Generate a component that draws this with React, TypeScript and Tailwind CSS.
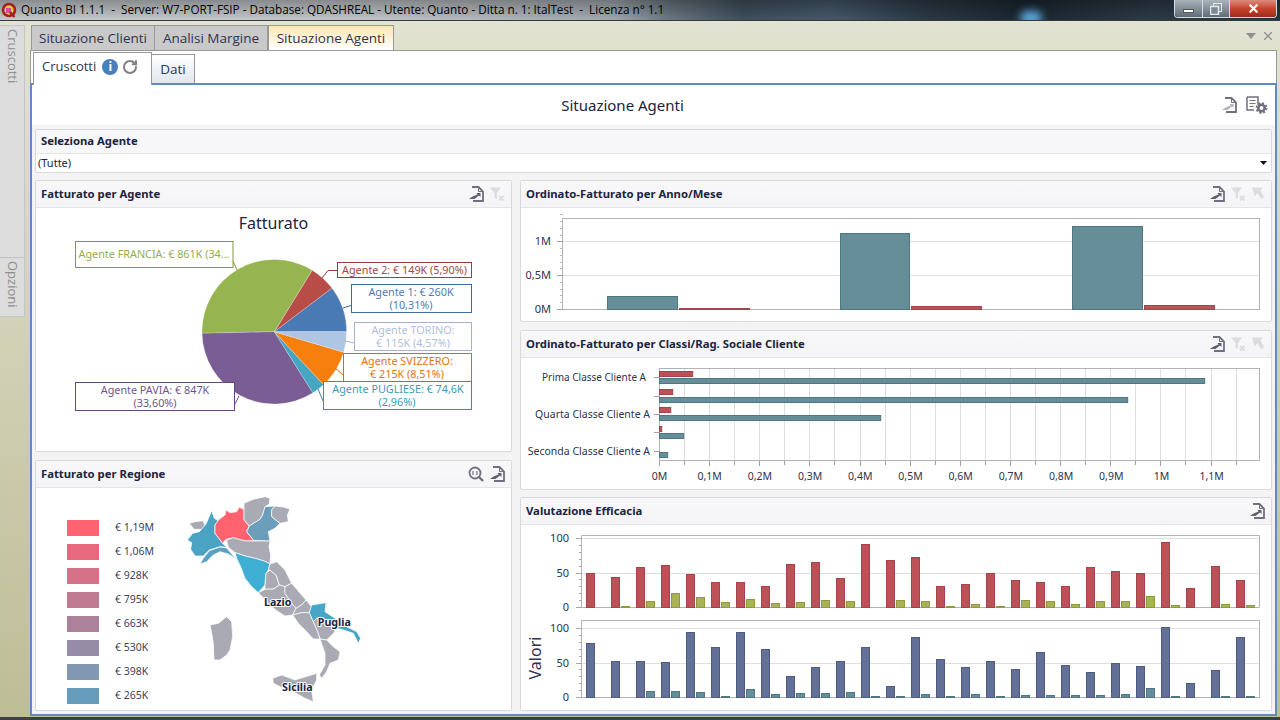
import type { ReactNode } from "react";
import { RotateCw, X } from "lucide-react";

const font = "font-['Noto_Sans',sans-serif]";
const chartFont = "'Noto Sans', sans-serif";

function ExportIcon({ light }: { light?: boolean }) {
  return (
    <svg width="16" height="16" viewBox="0 0 16 16" fill="none">
      <path d="M4 1h6.500L15 5.500V15H5" stroke="#70707f" strokeWidth="1.800" />
      <path d="M10.500 1v4.500H15" stroke="#70707f" />
      <path d="M8.500 7H12.500V11L11 9.500 6.500 13H1C3 11 6 10 9.500 8.500z" fill={light ? "#b4b4bc" : "#5f5f70"} />
    </svg>
  );
}

function FilterClearIcon() {
  return (
    <svg width="16" height="16" viewBox="0 0 16 16" fill="#dcdce0">
      <path d="M1 1.500h11L8 7v6L5.500 11.500V7z" />
      <path d="M10 10l4.500 4.500M14.500 10L10 14.500" stroke="#dcdce0" strokeWidth="1.800" />
    </svg>
  );
}

function DrillUpIcon() {
  return (
    <svg width="14" height="16" viewBox="0 0 14 16" fill="#dcdce0">
      <path d="M1 1.500h11L9.500 4.500 13 11 10 13 6.500 7 3.500 10.500z" />
    </svg>
  );
}

function ZoomIcon() {
  return (
    <svg width="16" height="16" viewBox="0 0 16 16" fill="none" stroke="#70707f">
      <circle cx="7" cy="7" r="5.500" strokeWidth="1.800" />
      <path d="M11 11l4 4" strokeWidth="2.400" />
      <path d="M5 5v4M9 5v4" strokeWidth="1.200" />
    </svg>
  );
}

function SettingsDocIcon() {
  return (
    <svg width="22" height="18" viewBox="0 0 22 18" fill="none">
      <path d="M1 1h11v8M1 1v13h7" stroke="#70707f" strokeWidth="1.500" />
      <path d="M3.500 4.500h6M3.500 7.500h6M3.500 10.500h4" stroke="#70707f" />
      <circle cx="15.500" cy="12" r="3.200" stroke="#70707f" strokeWidth="2.600" />
      <circle cx="15.500" cy="12" r="5" stroke="#70707f" strokeWidth="1.800" strokeDasharray="2 1.930" />
    </svg>
  );
}

function Panel({ title, icons, className, children }: { title: string; icons?: ReactNode; className: string; children: ReactNode }) {
  return (
    <div className={`flex flex-col bg-white border border-[#d9d9d9] rounded-[2px] overflow-hidden ${className}`}>
      <div className="h-[27px] shrink-0 flex items-center justify-between pl-[5px] pr-[6px] bg-gradient-to-b from-[#f8f8fa] to-[#f4f4f6] border-b border-[#e4e4e6]">
        <span className={`text-[11.300px] font-bold text-[#20233f] ${font}`}>{title}</span>
        <div className="flex items-center gap-[5px]">{icons}</div>
      </div>
      <div className="flex-1 min-h-0">{children}</div>
    </div>
  );
}

const slices = [
  { value: 10.31, color: "#4a7ab4" },
  { value: 5.9, color: "#b84d48" },
  { value: 34.15, color: "#96b550" },
  { value: 33.6, color: "#7b5d96" },
  { value: 2.96, color: "#44a6c2" },
  { value: 8.51, color: "#f77f0e" },
  { value: 4.57, color: "#afc5e4" },
];

function PieChart() {
  const cx = 274.3;
  const cy = 331.7;
  const r = 72.3;
  let start = 0;
  const labels = [
    { x: 75.5, y: 241.5, w: 157.5, h: 26, color: "#7f9a3e", text: "#93ad50", lines: [{ t: "Agente FRANCIA: € 861K (34...", x: 154, y: 258 }] },
    { x: 337.5, y: 262.5, w: 134, h: 15, color: "#a03c3a", text: "#a84440", lines: [{ t: "Agente 2: € 149K (5,90%)", x: 404.500, y: 274 }] },
    { x: 351.5, y: 284.5, w: 120, h: 28, color: "#3f6a9f", text: "#4f7cb0", lines: [{ t: "Agente 1: € 260K", x: 411, y: 296 }, { t: "(10,31%)", x: 411, y: 309 }] },
    { x: 354.5, y: 322.5, w: 117, h: 28, color: "#a3b3cf", text: "#afc0da", lines: [{ t: "Agente TORINO:", x: 413, y: 334 }, { t: "€ 115K (4,57%)", x: 413, y: 347 }] },
    { x: 343.5, y: 353.5, w: 128, h: 28, color: "#d96a08", text: "#e47410", lines: [{ t: "Agente SVIZZERO:", x: 407, y: 365 }, { t: "€ 215K (8,51%)", x: 407, y: 378 }] },
    { x: 323.5, y: 381.5, w: 148, h: 28, color: "#368fa8", text: "#3d9ab5", lines: [{ t: "Agente PUGLIESE: € 74,6K", x: 398, y: 393 }, { t: "(2,96%)", x: 397, y: 406 }] },
    { x: 75.5, y: 382.5, w: 159, h: 28, color: "#62487f", text: "#6f5590", lines: [{ t: "Agente PAVIA: € 847K", x: 155, y: 394 }, { t: "(33,60%)", x: 155, y: 407 }] },
  ];
  const leaders = [
    { d: "M233 261L237 270", c: "#7f9a3e" },
    { d: "M337 270.500H328L322 278", c: "#a03c3a" },
    { d: "M351 305.500L343 308", c: "#3f6a9f" },
    { d: "M354 343L345 341", c: "#a3b3cf" },
    { d: "M343 375L335 368", c: "#d96a08" },
    { d: "M323 401L318 389", c: "#368fa8" },
    { d: "M235 404L239 396", c: "#62487f" },
  ];
  return (
    <svg className="block" width="475" height="244" viewBox="36 208 475 244" fontFamily={chartFont}>
      <text x="273.500" y="229" textAnchor="middle" fontSize="16" fill="#20233f">Fatturato</text>
      {slices.map((s) => {
        const a0 = (start / 100) * Math.PI * 2;
        start += s.value;
        const a1 = (start / 100) * Math.PI * 2;
        const d = `M${cx} ${cy}L${cx + r * Math.cos(a0)} ${cy - r * Math.sin(a0)}A${r} ${r} 0 ${s.value > 50 ? 1 : 0} 0 ${cx + r * Math.cos(a1)} ${cy - r * Math.sin(a1)}Z`;
        return <path key={s.color} d={d} fill={s.color} stroke="#ffffff" strokeOpacity="0.4" strokeWidth="0.6" />;
      })}
      {leaders.map((l) => (
        <path key={l.d} d={l.d} stroke={l.c} fill="none" />
      ))}
      {labels.map((l) => (
        <g key={l.lines[0].t}>
          <rect x={l.x} y={l.y} width={l.w} height={l.h} fill="#ffffff" stroke={l.color} />
          {l.lines.map((line) => (
            <text key={line.t} x={line.x} y={line.y} textAnchor="middle" fontSize="10.800" fill={l.text}>{line.t}</text>
          ))}
        </g>
      ))}
    </svg>
  );
}

const legend: [string, string][] = [
  ["#ff6370", "€ 1,19M"],
  ["#e8687e", "€ 1,06M"],
  ["#d5728a", "€ 928K"],
  ["#c07a92", "€ 795K"],
  ["#ac829b", "€ 663K"],
  ["#968ca8", "€ 530K"],
  ["#8297b2", "€ 398K"],
  ["#669dbd", "€ 265K"],
];

const grey = "#aaaab4";
const regions: [string, string][] = [
  [grey, "58,100 75,95 100,92 105,110 95,118 72,118"],
  ["#4ba3c3", "125,62 133,85 145,92 135,105 135,130 158,160 170,172 150,170 135,175 118,180 100,198 75,198 62,178 65,158 52,150 68,130 88,125 108,102"],
  ["#5aa0c0", "90,222 100,205 118,182 135,176 150,171 170,174 192,200 200,208 175,192 150,185 130,195 110,215"],
  ["#ff6370", "145,90 165,75 168,60 180,68 200,65 207,52 222,58 222,90 238,108 230,125 252,152 225,153 190,143 168,148 158,160 135,130 135,105"],
  [grey, "222,40 250,28 285,20 300,25 298,42 285,50 278,75 270,88 238,108 222,90 222,58"],
  ["#6a9ebb", "285,50 315,48 305,60 305,80 330,100 315,115 295,125 300,153 252,152 230,125 238,108 270,88 278,75"],
  [grey, "305,60 315,48 345,52 360,58 352,75 355,95 330,100 305,80"],
  [grey, "170,150 190,143 225,153 255,153 300,153 297,170 302,195 300,222 285,214 255,205 225,198 195,188 175,172"],
  ["#3eaed3", "195,188 225,198 255,205 285,214 300,222 295,240 288,250 285,285 265,308 245,290 225,265 212,230 200,205"],
  [grey, "288,250 300,240 318,255 328,285 310,297 285,298 285,285"],
  [grey, "300,222 320,215 345,240 365,280 345,290 328,285 318,255 300,240 295,240"],
  [grey, "265,308 285,298 310,297 328,285 345,290 345,310 365,340 378,355 368,375 345,378 320,362 300,345"],
  [grey, "345,290 365,280 408,330 395,345 378,355 365,340 345,310"],
  [grey, "378,355 395,345 408,330 425,350 418,368 395,368 368,375"],
  [grey, "368,375 395,368 418,368 430,395 445,430 450,447 430,447 410,425 385,400"],
  ["#45a6c8", "425,345 468,338 465,365 495,385 520,405 560,425 572,445 565,460 550,430 520,420 490,412 470,395 440,385 430,395 418,368"],
  [grey, "430,395 440,385 470,395 490,412 495,425 470,450 450,447 445,430"],
  [grey, "450,447 470,450 490,470 510,485 505,510 480,520 470,545 455,565 448,555 465,525 465,490"],
  [grey, "308,565 335,555 375,570 440,550 440,570 425,600 430,635 405,625 370,605 330,590 310,580"],
  [grey, "120,405 145,400 170,380 185,395 188,440 180,480 170,495 150,510 132,510 130,460 125,430"],
];

function ItalyMap() {
  const labels = [
    { t: "Lazio", x: 323, y: 349 },
    { t: "Puglia", x: 493, y: 408 },
    { t: "Sicilia", x: 382, y: 602 },
  ];
  return (
    <svg className="block mt-[2px]" width="200" height="220" viewBox="0 0 600 660" fontFamily={chartFont}>
      {regions.map(([fill, points]) => (
        <polygon key={points} points={points} fill={fill} stroke="#ffffff" strokeWidth="2.200" strokeLinejoin="round" />
      ))}
      {labels.map((l) => (
        <text key={l.t} x={l.x} y={l.y} textAnchor="middle" fontSize="32" fontWeight="700" fill="#20233f" stroke="#ffffff" strokeWidth="6" paintOrder="stroke">{l.t}</text>
      ))}
    </svg>
  );
}

function YearChart() {
  const bars = [
    { x: 607, w: 71, top: 296, c: "teal" },
    { x: 679, w: 71, top: 308, c: "red" },
    { x: 840, w: 70, top: 233, c: "teal" },
    { x: 911, w: 71, top: 306, c: "red" },
    { x: 1072, w: 71, top: 226, c: "teal" },
    { x: 1144, w: 71, top: 305, c: "red" },
  ];
  const minor = [214, 221, 228, 235, 248, 255, 262, 268, 282, 289, 295, 302];
  return (
    <svg className="block" width="749" height="114" viewBox="521 208 749 114" fontFamily={chartFont} fontSize="11" fill="#30334f">
      <path d="M562.500 241.500H1259M562.500 275.500H1259" stroke="#dedede" />
      <rect x="562.500" y="218.500" width="697" height="91" fill="none" stroke="#b3b3b3" />
      <path d="M557 241.500h6M557 275.500h6M557 309.500h6" stroke="#a0a0a0" />
      {minor.map((y) => (
        <path key={y} d={`M560 ${y + 0.5}h3`} stroke="#b8b8b8" />
      ))}
      <text x="551" y="245" textAnchor="end">1M</text>
      <text x="551" y="279" textAnchor="end">0,5M</text>
      <text x="551" y="313" textAnchor="end">0M</text>
      {bars.map((b) => (
        <rect key={b.x} x={b.x + 0.5} y={b.top + 0.5} width={b.w - 1} height={309 - b.top} fill={b.c === "teal" ? "#658e99" : "#be5058"} stroke={b.c === "teal" ? "#4f7682" : "#a4434c"} />
      ))}
    </svg>
  );
}

function ClassChart() {
  const x0 = 659.5;
  const rows = [
    { y: 371, h: 6, to: 692.7, c: "red" },
    { y: 378, h: 6, to: 1204.7, c: "teal" },
    { y: 389, h: 6, to: 672.7, c: "red" },
    { y: 397, h: 6, to: 1127.7, c: "teal" },
    { y: 407, h: 6, to: 670.7, c: "red" },
    { y: 415, h: 6, to: 880.7, c: "teal" },
    { y: 426, h: 6, to: 661.7, c: "red" },
    { y: 433, h: 6, to: 683.7, c: "teal" },
    { y: 452, h: 6, to: 667.7, c: "teal" },
  ];
  const grid = Array.from({ length: 23 }, (_, i) => Math.round(659 + (i + 1) * 25.07) + 0.5);
  const ticks = ["0M", "0,1M", "0,2M", "0,3M", "0,4M", "0,5M", "0,6M", "0,7M", "0,8M", "0,9M", "1M", "1,1M"];
  return (
    <svg className="block" width="749" height="132" viewBox="521 358 749 132" fontFamily={chartFont} fontSize="10.500" fill="#30334f">
      {grid.map((x) => (
        <path key={x} d={`M${x} 369V461`} stroke="#dedede" />
      ))}
      <rect x={x0} y="368.500" width="600" height="92" fill="none" stroke="#b3b3b3" />
      {grid.map((x, i) => (
        <path key={x} d={`M${x} 461v${i % 2 === 1 ? 5 : 4}`} stroke="#a0a0a0" />
      ))}
      <path d="M659.500 461v5" stroke="#a0a0a0" />
      {[377, 396, 414, 432, 451].map((y) => (
        <path key={y} d={`M654 ${y + 0.5}h6`} stroke="#a0a0a0" />
      ))}
      <text x="542" y="381" textLength="104" lengthAdjust="spacingAndGlyphs">Prima Classe Cliente A</text>
      <text x="650" y="418" textAnchor="end">Quarta Classe Cliente A</text>
      <text x="650" y="455" textAnchor="end">Seconda Classe Cliente A</text>
      {rows.map((r) => (
        <rect key={r.y} x={x0} y={r.y + 0.5} width={r.to - x0} height={r.h - 1} fill={r.c === "teal" ? "#658e99" : "#be5058"} stroke={r.c === "teal" ? "#4f7682" : "#a4434c"} />
      ))}
      {ticks.map((t, i) => (
        <text key={t} x={659.5 + i * 50.2} y="480" textAnchor="middle">{t}</text>
      ))}
    </svg>
  );
}

const redTops = [235, 247, 217, 211, 238, 262, 262, 274, 208, 202, 250, 148, 196, 187, 274, 268, 235, 256, 262, 274, 217, 229, 235, 142, 280, 214, 256];
const oliveTops = [337, 334, 319, 295, 307, 322, 313, 325, 322, 316, 319, 337, 316, 319, 334, 328, 334, 316, 319, 328, 319, 319, 304, 331, 337, 328, 331];
const blueTops = [445, 499, 499, 502, 412, 457, 412, 463, 544, 517, 499, 457, 574, 427, 493, 517, 499, 523, 472, 511, 532, 505, 514, 397, 565, 526, 427];
const tealTops = [607, 607, 589, 589, 592, 604, 583, 598, 595, 595, 592, 604, 604, 598, 604, 598, 604, 601, 601, 601, 601, 598, 580, 604, 607, 604, 604];

function Pane({ top, bottom, y100, y50, aTops, bTops, base, a, b }: { top: number; bottom: number; y100: number; y50: number; aTops: number[]; bTops: number[]; base: number; a: string[]; b: string[] }) {
  const step = (bottom - y100) / 10;
  return (
    <g>
      <path d={`M582 ${y100 + 0.5}H1259M582 ${y50 + 0.5}H1259`} stroke="#dedede" />
      <path d={`M581.500 ${bottom + 0.5}V${top + 0.5}H1259.500V${bottom + 0.5}H576`} fill="none" stroke="#b3b3b3" />
      {Array.from({ length: 11 }, (_, i) => (
        <path key={i} d={`M${i % 5 === 0 ? 576 : 579} ${Math.round(y100 + i * step) + 0.5}h${i % 5 === 0 ? 6 : 3}`} stroke="#a8a8a8" />
      ))}
      <text x="569" y={y100 + 4} textAnchor="end">100</text>
      <text x="569" y={y50 + 4} textAnchor="end">50</text>
      <text x="569" y={bottom + 4} textAnchor="end">0</text>
      {aTops.map((t, i) => {
        const h = (base - t) / 3;
        return <rect key={i} x={586.5 + i * 25} y={bottom - h + 0.5} width="8" height={h} fill={a[0]} stroke={a[1]} />;
      })}
      {bTops.map((t, i) => {
        const h = (base - t) / 3;
        return h > 0 ? <rect key={i} x={596.5 + i * 25} y={bottom - h + 0.5} width="8" height={h} fill={b[0]} stroke={b[1]} /> : null;
      })}
    </g>
  );
}

function EfficacyChart() {
  return (
    <svg className="block" width="749" height="186" viewBox="521 525 749 186" fontFamily={chartFont} fontSize="11" fill="#30334f">
      <Pane top={535} bottom={607} y100={538} y50={573} aTops={redTops} bTops={oliveTops} base={337} a={["#be5058", "#a4434c"]} b={["#a9b256", "#8f9a3d"]} />
      <Pane top={620} bottom={697} y100={628} y50={663} aTops={blueTops} bTops={tealTops} base={607} a={["#637199", "#4e5c85"]} b={["#658e99", "#4f7682"]} />
      <text x="541" y="658" textAnchor="middle" fontSize="16" transform="rotate(-90 541 658)">Valori</text>
    </svg>
  );
}

export default function App() {
  return (
    <div className="w-[1280px] h-[720px] overflow-hidden flex flex-col bg-[#e2e2d2]">
      {/* Title bar */}
      <div className="relative h-[21px] shrink-0 flex items-center overflow-hidden bg-[linear-gradient(to_right,#c6cacc_0%,#c0c4c7_30%,#a0a8ae_48%,#6c7984_52%,#3f4f5c_58%,#46586a_65%,#2c3b47_72%,#1a2731_80%,#2c3b47_90%,#26343f_100%)] border-b border-[#33383c]">
        <div className="absolute inset-0 bg-gradient-to-b from-black/30 to-transparent" />
        <div className="absolute left-[1020px] top-[11px] w-[22px] h-[14px] rounded-full bg-[#5da9e0] blur-[4px]" />
        <svg className="relative ml-[1px]" width="16" height="16" viewBox="0 0 16 16">
          <circle cx="8" cy="8" r="4.500" fill="#e8c940" />
          <path d="M5 6h5v5H5z" fill="#d84a9a" />
          <circle cx="8" cy="8" r="6" fill="none" stroke="#a81f1f" strokeWidth="2.500" />
          <path d="M9 10l4.500 5" stroke="#a81f1f" strokeWidth="2.500" />
        </svg>
        <span className="relative ml-[4px] text-[11.700px] whitespace-pre text-black font-['Open_Sans',sans-serif]">Quanto BI 1.1.1  -  Server: W7-PORT-FSIP - Database: QDASHREAL - Utente: Quanto - Ditta n. 1: ItalTest  -  Licenza n° 1.1</span>
        <div className="absolute right-[3px] top-0 h-[18px] w-[103px] flex border border-t-0 border-[#d5dade] rounded-b-[4px] overflow-hidden">
          <div className="w-[28px] flex items-center justify-center bg-gradient-to-b from-[#aab4bc] to-[#5f6c77] border-r border-[#d5dade]">
            <div className="w-[11px] h-[4px] mt-[5px] bg-white border border-[#555]" />
          </div>
          <div className="w-[27px] flex items-center justify-center bg-gradient-to-b from-[#aab4bc] to-[#5f6c77] border-r border-[#d5dade]">
            <svg width="12" height="12" viewBox="0 0 12 12" fill="none" stroke="#e4e8ea">
              <rect x="3.500" y="0.500" width="8" height="8" />
              <rect x="0.500" y="3.500" width="8" height="8" fill="#7d8994" strokeWidth="1.500" />
            </svg>
          </div>
          <div className="flex-1 flex items-center justify-center bg-gradient-to-b from-[#d98a7c] via-[#c8432d] to-[#9e2b1c]">
            <X size={13} color="#ffffff" strokeWidth={4} />
          </div>
        </div>
      </div>

      <div className="flex-1 min-h-0 flex bg-gradient-to-b from-[#e2e2d2] to-[#bdbd96] border-t border-[#fff]/60">
        {/* Side tabs */}
        <div className="w-[25px] shrink-0 pt-[3px] flex flex-col">
          <div className="h-[233px] bg-[#dcdcdc] border border-l-0 border-[#c4c4c4] flex justify-center pt-[3px]">
            <span className="[writing-mode:vertical-rl] text-[13px] text-[#8f8f8f] font-['Open_Sans',sans-serif]">Cruscotti</span>
          </div>
          <div className="h-[59px] bg-[#dcdcdc] border border-t-0 border-l-0 border-[#c4c4c4] flex justify-center pt-[3px]">
            <span className="[writing-mode:vertical-rl] text-[13px] text-[#8f8f8f] font-['Open_Sans',sans-serif]">Opzioni</span>
          </div>
        </div>

        <div className="flex-1 min-w-0 ml-[5px] mr-[3px] flex flex-col">
          {/* Document tabs */}
          <div className="h-[28px] shrink-0 pt-[3px] pl-[1px] flex items-stretch relative text-[13.500px] text-[#30334f] font-['Open_Sans',sans-serif]">
            <div className="w-[124px] flex items-center justify-center bg-[#c9c9c9] border border-b-0 border-[#999]">Situazione Clienti</div>
            <div className="w-[113px] flex items-center justify-center bg-[#c9c9c9] border border-b-0 border-l-0 border-[#999]">Analisi Margine</div>
            <div className="w-[126px] flex items-center justify-center bg-gradient-to-b from-[#fde7ae] to-white border border-b-0 border-[#999]">Situazione Agenti</div>
            <svg className="absolute right-[21px] top-[11px]" width="10" height="6" viewBox="0 0 10 6"><path d="M0 0h10L5 6z" fill="#8f8f8f" /></svg>
            <X className="absolute right-[2px] top-[7px]" size={14} color="#8f8f8f" strokeWidth={2} />
          </div>

          {/* Sub tabs */}
          <div className="h-[33px] shrink-0 bg-white border border-b-0 border-[#999] flex items-start pt-px pl-[2px] text-[13.500px] text-[#30334f]">
            <div className="relative z-10 w-[119px] h-[33px] flex items-center pl-[8px] pb-[4px] border border-b-0 border-[#999] bg-white font-['Open_Sans',sans-serif]">
              <span className="text-[13px]">Cruscotti</span>
              <span className="ml-[6px] w-[16px] h-[16px] rounded-full bg-[#4a80ba] text-white text-[12px] font-bold flex items-center justify-center">i</span>
              <RotateCw className="ml-[4px]" size={16} color="#7f7f7f" strokeWidth={3} />
            </div>
            <div className="w-[43px] h-[30px] mt-[2px] flex items-center justify-center bg-gradient-to-b from-white to-[#dfe6ee] border border-b-0 border-l-0 border-[#999] font-['Open_Sans',sans-serif]">Dati</div>
          </div>

          {/* Dashboard */}
          <div className="flex-1 min-h-0 bg-[#f3f3f3] border-2 border-[#5f8ac6] flex flex-col px-[3px]">
            <div className="h-[40px] shrink-0 -mx-[3px] bg-white relative flex items-center justify-center pr-[62px]">
              <span className={`text-[15px] text-[#20233f] ${font}`}>Situazione Agenti</span>
              <div className="absolute right-[7px] top-[11px] flex items-center gap-[9px]">
                <ExportIcon light />
                <SettingsDocIcon />
              </div>
            </div>
            <div className="mt-[4px] h-[44px] shrink-0 bg-white border border-[#d9d9d9] rounded-[2px] flex flex-col">
              <div className="h-[24px] flex items-center pl-[5px] bg-[#f7f7f9] border-b border-[#e4e4e6]">
                <span className={`text-[11.300px] font-bold text-[#20233f] ${font}`}>Seleziona Agente</span>
              </div>
              <div className="flex-1 flex items-center justify-between pl-[2px] pr-[4px]">
                <span className={`text-[11px] text-[#20233f] ${font}`}>(Tutte)</span>
                <svg width="7" height="4" viewBox="0 0 7 4"><path d="M0 0h7L3.500 4z" fill="#111" /></svg>
              </div>
            </div>
            <div className="mt-[7px] flex gap-[8px] flex-1 min-h-0">
              <div className="w-[477px] shrink-0 flex flex-col gap-[8px]">
                <Panel title="Fatturato per Agente" className="h-[272px]" icons={<><ExportIcon /><FilterClearIcon /></>}>
                  <PieChart />
                </Panel>
                <Panel title="Fatturato per Regione" className="h-[251px]" icons={<><ZoomIcon /><ExportIcon /></>}>
                  <div className="flex">
                    <div className="ml-[31px] mt-[32px] w-[103px] shrink-0 flex flex-col gap-2">
                      {legend.map(([color, label]) => (
                        <div key={label} className="flex items-center gap-4 h-4">
                          <div className="w-8 h-4 shrink-0" style={{ backgroundColor: color }} />
                          <span className={`text-[10.500px] text-[#40435a] whitespace-nowrap ${font}`}>{label}</span>
                        </div>
                      ))}
                    </div>
                    <ItalyMap />
                  </div>
                </Panel>
              </div>
              <div className="flex-1 min-w-0 flex flex-col">
                <Panel title="Ordinato-Fatturato per Anno/Mese" className="h-[142px]" icons={<><ExportIcon /><FilterClearIcon /><DrillUpIcon /></>}>
                  <YearChart />
                </Panel>
                <Panel title="Ordinato-Fatturato per Classi/Rag. Sociale Cliente" className="h-[160px] mt-[8px]" icons={<><ExportIcon /><FilterClearIcon /><DrillUpIcon /></>}>
                  <ClassChart />
                </Panel>
                <Panel title="Valutazione Efficacia" className="h-[214px] mt-[7px]" icons={<ExportIcon />}>
                  <EfficacyChart />
                </Panel>
              </div>
            </div>
          </div>
        </div>
      </div>
      <div className="h-[4px] shrink-0 bg-[#3a4046] border-t border-[#bdbd96]" />
    </div>
  );
}
